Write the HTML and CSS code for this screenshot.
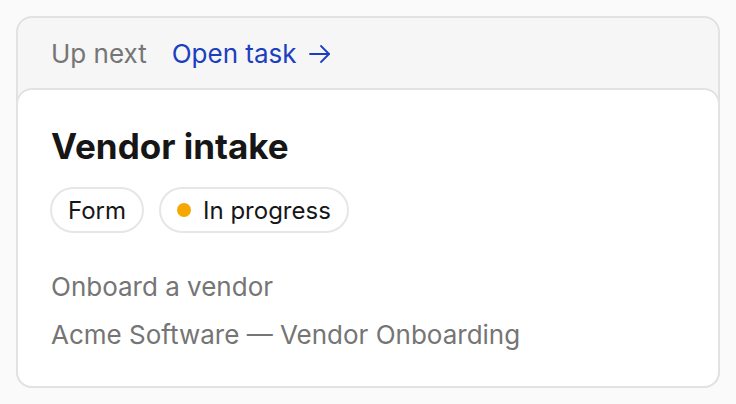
FILE: index.html
```html
<!DOCTYPE html>
<html lang="en">
<head>
<meta charset="UTF-8">
<meta name="viewport" content="width=device-width, initial-scale=1.0">
<title>Up next</title>
<link rel="stylesheet" href="styles.css">
</head>
<body>
<div class="panel">
  <div class="panel-head">
    <span class="label">Up next</span>
    <a class="open-link" href="#">Open task
      <svg class="arrow" width="24" height="24" viewBox="0 0 24 24" fill="none" stroke="currentColor" stroke-width="1.8" stroke-linecap="round" stroke-linejoin="round">
        <path d="M2 12h19"/>
        <path d="M13 4l8 8-8 8"/>
      </svg>
    </a>
  </div>

  <div class="task-card">
    <h1 class="task-title">Vendor intake</h1>
    <div class="tags">
      <span class="tag">Form</span>
      <span class="tag"><span class="dot"></span>In progress</span>
    </div>
    <p class="meta">Onboard a vendor</p>
    <p class="meta">Acme Software — Vendor Onboarding</p>
  </div>
</div>
</body>
</html>
```

FILE: styles.css
```css
body {
  margin: 0;
  padding: 16px;
  background-color: #fafafa;
  font-family: Inter, "Noto Sans", sans-serif;
}

.panel {
  background-color: #f6f6f6;
  border: 2px solid #e2e2e2;
  border-radius: 16px;
  height: 372px;
  box-sizing: border-box;
  display: flex;
  flex-direction: column;
}

.panel-head {
  display: flex;
  align-items: center;
  gap: 25px;
  height: 70px;
  box-sizing: border-box;
  padding: 2px 33px 0;
  font-size: 26px;
  line-height: 32px;
}

.label {
  color: #757575;
}

.open-link {
  color: #1b3fc0;
  text-decoration: none;
  display: flex;
  align-items: center;
  gap: 11px;
}

.task-card {
  flex: 1;
  background-color: #ffffff;
  border: 2px solid #e2e2e2;
  border-radius: 16px;
  margin: 0 -2px -2px;
  padding: 34px 32px 0;
}

.task-title {
  margin: 0 0 0 1px;
  font-size: 35px;
  line-height: 44px;
  font-weight: 700;
  color: #161616;
}

.tags {
  display: flex;
  gap: 15px;
  margin-top: 19px;
  margin-bottom: 40px;
}

.tag {
  display: flex;
  align-items: center;
  gap: 12px;
  height: 46px;
  box-sizing: border-box;
  padding: 0 16px;
  border: 2px solid #e6e6e6;
  border-radius: 23px;
  font-size: 24px;
  color: #161616;
}

.dot {
  width: 14px;
  height: 14px;
  border-radius: 50%;
  background-color: #f7a800;
}

.meta {
  margin: 0 0 20px 1px;
  font-size: 26px;
  line-height: 28px;
  color: #757575;
}
```
